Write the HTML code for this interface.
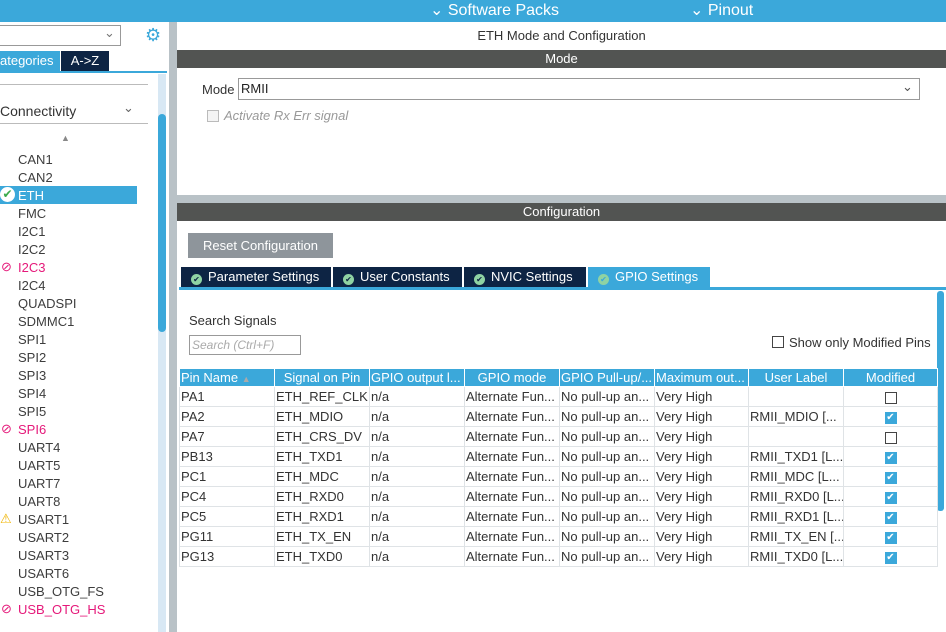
<!DOCTYPE html>
<html><head><style>
*{margin:0;padding:0;box-sizing:border-box}
body{width:946px;height:632px;overflow:hidden;background:#fff;font-family:"Liberation Sans",sans-serif;position:relative;color:#333;font-size:13px}
.a{position:absolute}
.li{position:absolute;left:18px;font-size:13px;color:#3d3d3d}
.pink{color:#e5197a}
table{border-collapse:collapse;position:absolute;left:179px;top:368px;font-size:13px;table-layout:fixed;width:758px}
td,th{height:20px;border:1px solid #dfe3e6;white-space:nowrap;overflow:hidden;padding:0 1px;text-align:left;font-weight:normal}
th{background:#3ba8da;color:#fff;text-align:center;border-color:#fff;height:18px}
.cb{display:inline-block;width:12px;height:12px;border:1px solid #444;vertical-align:middle}
.ck{display:inline-block;width:12px;height:12px;background:#3ba8da;color:#fff;font-size:10px;line-height:12px;text-align:center;vertical-align:middle}
.tab{position:absolute;top:267px;height:20px;background:#0d2444;color:#fff;font-size:13px;line-height:20px;padding-left:10px}
.tab i{display:inline-block;width:11px;height:11px;border-radius:50%;background:#8fd3a3;margin-right:6px;vertical-align:-1px;font-style:normal;font-size:8px;line-height:11px;text-align:center;color:#0d2444}
</style></head><body>
<div class="a" style="left:0;top:0;width:946px;height:22px;background:#3ba8da"></div>
<div class="a" style="left:430px;top:0;color:#fff;font-size:16px">⌄ Software Packs</div>
<div class="a" style="left:690px;top:0;color:#fff;font-size:16px">⌄ Pinout</div>
<!-- left -->
<div class="a" style="left:0;top:25px;width:121px;height:21px;border:1px solid #999;border-left:none"></div>
<div class="a" style="left:104px;top:25px;color:#777">⌄</div>
<div class="a" style="left:145px;top:25px;color:#3ba8da;font-size:18px">⚙</div>
<div class="a" style="left:0;top:51px;width:60px;height:20px;background:#3ba8da;color:#fff;line-height:20px;font-size:13px">ategories</div>
<div class="a" style="left:61px;top:51px;width:48px;height:20px;background:#0d2444;color:#fff;line-height:20px;text-align:center;font-size:13px">A-&gt;Z</div>
<div class="a" style="left:0;top:71px;width:167px;height:2px;background:#3ba8da"></div>
<div class="a" style="left:0;top:84px;width:148px;height:1px;background:#bbb"></div>
<div class="a" style="left:0;top:103px;font-size:14px;color:#333">Connectivity</div>
<div class="a" style="left:123px;top:100px;color:#666">⌄</div>
<div class="a" style="left:0;top:123px;width:148px;height:1px;background:#bbb"></div>
<div class="a" style="left:61px;top:133px;color:#888;font-size:9px">▲</div>
<div class="a" style="left:0;top:186px;width:137px;height:18px;background:#3ba8da"></div>
<div class="a" style="left:0;top:187px;width:15px;height:15px;border-radius:50%;background:#fff;color:#3aaa4a;font-size:12px;line-height:15px;text-align:center">✔</div>
<div class="li" style="top:152px">CAN1</div><div class="li" style="top:170px">CAN2</div>
<div class="li" style="top:188px;color:#fff">ETH</div><div class="li" style="top:206px">FMC</div>
<div class="li" style="top:224px">I2C1</div><div class="li" style="top:242px">I2C2</div>
<div class="li pink" style="top:260px">I2C3</div><div class="li" style="top:278px">I2C4</div>
<div class="li" style="top:296px">QUADSPI</div><div class="li" style="top:314px">SDMMC1</div>
<div class="li" style="top:332px">SPI1</div><div class="li" style="top:350px">SPI2</div>
<div class="li" style="top:368px">SPI3</div><div class="li" style="top:386px">SPI4</div>
<div class="li" style="top:404px">SPI5</div><div class="li pink" style="top:422px">SPI6</div>
<div class="li" style="top:440px">UART4</div><div class="li" style="top:458px">UART5</div>
<div class="li" style="top:476px">UART7</div><div class="li" style="top:494px">UART8</div>
<div class="li" style="top:512px">USART1</div><div class="li" style="top:530px">USART2</div>
<div class="li" style="top:548px">USART3</div><div class="li" style="top:566px">USART6</div>
<div class="li" style="top:584px">USB_OTG_FS</div><div class="li pink" style="top:602px">USB_OTG_HS</div>
<div class="a pink" style="left:1px;top:259px;font-size:13px">⊘</div>
<div class="a pink" style="left:1px;top:421px;font-size:13px">⊘</div>
<div class="a pink" style="left:1px;top:601px;font-size:13px">⊘</div>
<div class="a" style="left:0;top:511px;color:#f0b400;font-size:13px">⚠</div>
<div class="a" style="left:158px;top:74px;width:8px;height:558px;background:#d8e8f4"></div>
<div class="a" style="left:158px;top:114px;width:8px;height:218px;background:#3ba8da;border-radius:4px"></div>
<div class="a" style="left:169px;top:22px;width:8px;height:610px;background:#b9c2c7"></div>
<!-- right -->
<div class="a" style="left:177px;top:28px;width:769px;text-align:center;font-size:13px;color:#333">ETH Mode and Configuration</div>
<div class="a" style="left:177px;top:50px;width:769px;height:18px;background:#525452;color:#fff;text-align:center;line-height:18px;font-size:13px">Mode</div>
<div class="a" style="left:202px;top:82px;font-size:13px">Mode</div>
<div class="a" style="left:238px;top:78px;width:682px;height:22px;border:1px solid #999;padding-left:2px;line-height:20px;font-size:13px;color:#222">RMII</div>
<div class="a" style="left:902px;top:79px;color:#555">⌄</div>
<div class="a" style="left:207px;top:110px;width:12px;height:12px;border:1px solid #bbb;background:#f4f4f4"></div>
<div class="a" style="left:224px;top:108px;font-style:italic;color:#999;font-size:13px">Activate Rx Err signal</div>
<div class="a" style="left:177px;top:195px;width:769px;height:8px;background:#b9c2c7"></div>
<div class="a" style="left:177px;top:203px;width:769px;height:18px;background:#525452;color:#fff;text-align:center;line-height:18px;font-size:13px">Configuration</div>
<div class="a" style="left:188px;top:233px;width:145px;height:25px;background:#8e959b;color:#fff;line-height:25px;text-align:center;font-size:13px">Reset Configuration</div>
<div class="tab" style="left:181px;width:150px"><i>✔</i>Parameter Settings</div>
<div class="tab" style="left:333px;width:129px"><i>✔</i>User Constants</div>
<div class="tab" style="left:464px;width:122px"><i>✔</i>NVIC Settings</div>
<div class="tab" style="left:588px;width:122px;background:#3ba8da"><i style="color:#3ba8da">✔</i>GPIO Settings</div>
<div class="a" style="left:179px;top:287px;width:767px;height:3px;background:#3ba8da"></div>
<div class="a" style="left:937px;top:291px;width:7px;height:220px;background:#3ba8da;border-radius:3px"></div>
<div class="a" style="left:189px;top:313px;font-size:13px">Search Signals</div>
<div class="a" style="left:189px;top:335px;width:112px;height:20px;border:1px solid #999;font-style:italic;color:#aaa;font-size:12px;line-height:18px;padding-left:2px">Search (Ctrl+F)</div>
<div class="a" style="left:772px;top:336px;width:12px;height:12px;border:1px solid #444"></div>
<div class="a" style="left:789px;top:335px;font-size:13px">Show only Modified Pins</div>
<table>
<colgroup><col style="width:95px"><col style="width:95px"><col style="width:95px"><col style="width:95px"><col style="width:95px"><col style="width:94px"><col style="width:95px"><col style="width:94px"></colgroup>
<tr><th style="text-align:left">Pin Name <span style="color:#aaa;font-size:9px">▲</span></th><th>Signal on Pin</th><th style="text-align:left">GPIO output l...</th><th>GPIO mode</th><th style="text-align:left">GPIO Pull-up/...</th><th style="text-align:left">Maximum out...</th><th>User Label</th><th>Modified</th></tr>
<tr><td>PA1</td><td>ETH_REF_CLK</td><td>n/a</td><td>Alternate Fun...</td><td>No pull-up an...</td><td>Very High</td><td></td><td style="text-align:center"><span class="cb"></span></td></tr>
<tr><td>PA2</td><td>ETH_MDIO</td><td>n/a</td><td>Alternate Fun...</td><td>No pull-up an...</td><td>Very High</td><td>RMII_MDIO [...</td><td style="text-align:center"><span class="ck">✔</span></td></tr>
<tr><td>PA7</td><td>ETH_CRS_DV</td><td>n/a</td><td>Alternate Fun...</td><td>No pull-up an...</td><td>Very High</td><td></td><td style="text-align:center"><span class="cb"></span></td></tr>
<tr><td>PB13</td><td>ETH_TXD1</td><td>n/a</td><td>Alternate Fun...</td><td>No pull-up an...</td><td>Very High</td><td>RMII_TXD1 [L...</td><td style="text-align:center"><span class="ck">✔</span></td></tr>
<tr><td>PC1</td><td>ETH_MDC</td><td>n/a</td><td>Alternate Fun...</td><td>No pull-up an...</td><td>Very High</td><td>RMII_MDC [L...</td><td style="text-align:center"><span class="ck">✔</span></td></tr>
<tr><td>PC4</td><td>ETH_RXD0</td><td>n/a</td><td>Alternate Fun...</td><td>No pull-up an...</td><td>Very High</td><td>RMII_RXD0 [L...</td><td style="text-align:center"><span class="ck">✔</span></td></tr>
<tr><td>PC5</td><td>ETH_RXD1</td><td>n/a</td><td>Alternate Fun...</td><td>No pull-up an...</td><td>Very High</td><td>RMII_RXD1 [L...</td><td style="text-align:center"><span class="ck">✔</span></td></tr>
<tr><td>PG11</td><td>ETH_TX_EN</td><td>n/a</td><td>Alternate Fun...</td><td>No pull-up an...</td><td>Very High</td><td>RMII_TX_EN [...</td><td style="text-align:center"><span class="ck">✔</span></td></tr>
<tr><td>PG13</td><td>ETH_TXD0</td><td>n/a</td><td>Alternate Fun...</td><td>No pull-up an...</td><td>Very High</td><td>RMII_TXD0 [L...</td><td style="text-align:center"><span class="ck">✔</span></td></tr>
</table>
</body></html>
